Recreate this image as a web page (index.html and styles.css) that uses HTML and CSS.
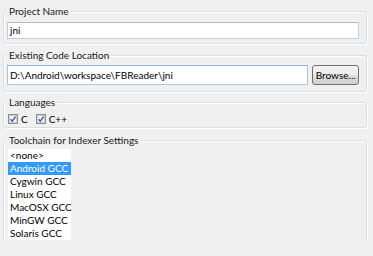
FILE: index.html
```html
<!DOCTYPE html>
<html lang="en">
<head>
    <meta charset="UTF-8">
    <title>New Project</title>
    <link rel="stylesheet" href="styles.css">
</head>
<body>
<fieldset class="group group-name">
    <legend>Project Name</legend>
    <div class="field field-name">jni</div>
</fieldset>

<fieldset class="group group-location">
    <legend>Existing Code Location</legend>
    <div class="location-row">
        <div class="field field-location">D:\Android\workspace\FBReader\jni</div>
        <button class="browse">Browse...</button>
    </div>
</fieldset>

<fieldset class="group group-languages">
    <legend>Languages</legend>
    <div class="checks">
        <label class="check">
            <svg class="box" width="10" height="10" viewBox="0 0 10 10">
                <rect x="0.5" y="0.5" width="9" height="9" fill="#e6e9ee" stroke="#8e8f8f"/>
                <rect x="1.5" y="1.5" width="7" height="7" fill="#f4f5f7" stroke="#c9ced6"/>
                <path d="M2.6 5.2 L4.3 7.2 L7.6 2.6" fill="none" stroke="#3c5aa8" stroke-width="1.4"/>
            </svg>
            C
        </label>
        <label class="check">
            <svg class="box" width="10" height="10" viewBox="0 0 10 10">
                <rect x="0.5" y="0.5" width="9" height="9" fill="#e6e9ee" stroke="#8e8f8f"/>
                <rect x="1.5" y="1.5" width="7" height="7" fill="#f4f5f7" stroke="#c9ced6"/>
                <path d="M2.6 5.2 L4.3 7.2 L7.6 2.6" fill="none" stroke="#3c5aa8" stroke-width="1.4"/>
            </svg>
            C++
        </label>
    </div>
</fieldset>

<fieldset class="group group-toolchain">
    <legend>Toolchain for Indexer Settings</legend>
    <ul class="toolchains">
        <li>&lt;none&gt;</li>
        <li class="selected">Android GCC</li>
        <li>Cygwin GCC</li>
        <li>Linux GCC</li>
        <li>MacOSX GCC</li>
        <li>MinGW GCC</li>
        <li>Solaris GCC</li>
    </ul>
</fieldset>
</body>
</html>
```

FILE: styles.css
```css
body {
    margin: 0;
    padding-top: 4px;
    background-color: #f0f0f0;
    font-family: Lato, "Noto Sans", sans-serif;
    font-size: 10px;
    color: #000;
}

.group {
    margin: 0 6px 0 3px;
    padding: 0 7px 0 3px;
    border: 1px solid #d5dfe5;
    border-radius: 3px;
    box-shadow: inset 1px 1px 0 #fff, 1px 1px 0 #fff;
    min-width: 0;
}

.group legend {
    padding: 0 2px;
    line-height: 14px;
    background-color: #f0f0f0;
    color: #1a1a1a;
}

.field {
    box-sizing: border-box;
    background-color: #fff;
    border: 1px solid #c8ccd2;
    border-top-color: #b5b9c0;
    padding: 0 2px;
    white-space: nowrap;
    overflow: hidden;
}

.group-name {
    padding-bottom: 4px;
}

.field-name {
    margin-top: 4px;
    height: 17px;
    line-height: 15px;
}

.group-location {
    margin-top: 4px;
    padding-bottom: 6px;
}

.location-row {
    display: flex;
    gap: 4px;
    margin-top: 3px;
}

.field-location {
    width: 304px;
    height: 20px;
    line-height: 18px;
    border-color: #a9c6e3;
    border-top-color: #8fb4da;
}

.browse {
    width: 47px;
    height: 20px;
    padding: 0;
    border: 1px solid #707070;
    border-radius: 3px;
    background: linear-gradient(#f4f4f4 0%, #ececec 45%, #dedede 55%, #d0d0d0 100%);
    font-family: inherit;
    font-size: 10px;
    line-height: 18px;
    color: #000;
}

.group-languages {
    margin-top: 3px;
    padding-bottom: 1px;
}

.checks {
    display: flex;
    gap: 8px;
    margin-top: 3px;
    margin-left: 1px;
    line-height: 14px;
}

.check {
    display: flex;
    align-items: center;
    gap: 3px;
}

.group-toolchain {
    margin-top: 5px;
    padding-bottom: 2px;
    border-bottom: 0;
    border-radius: 3px 3px 0 0;
}

.toolchains {
    list-style: none;
    margin: 2px 0 0 1px;
    padding: 0;
    width: 63px;
    background-color: #fff;
    white-space: nowrap;
}

.toolchains li {
    height: 13px;
    line-height: 13px;
    padding-left: 2px;
}

.toolchains .selected {
    background-color: #3399ff;
    color: #fff;
}
```
